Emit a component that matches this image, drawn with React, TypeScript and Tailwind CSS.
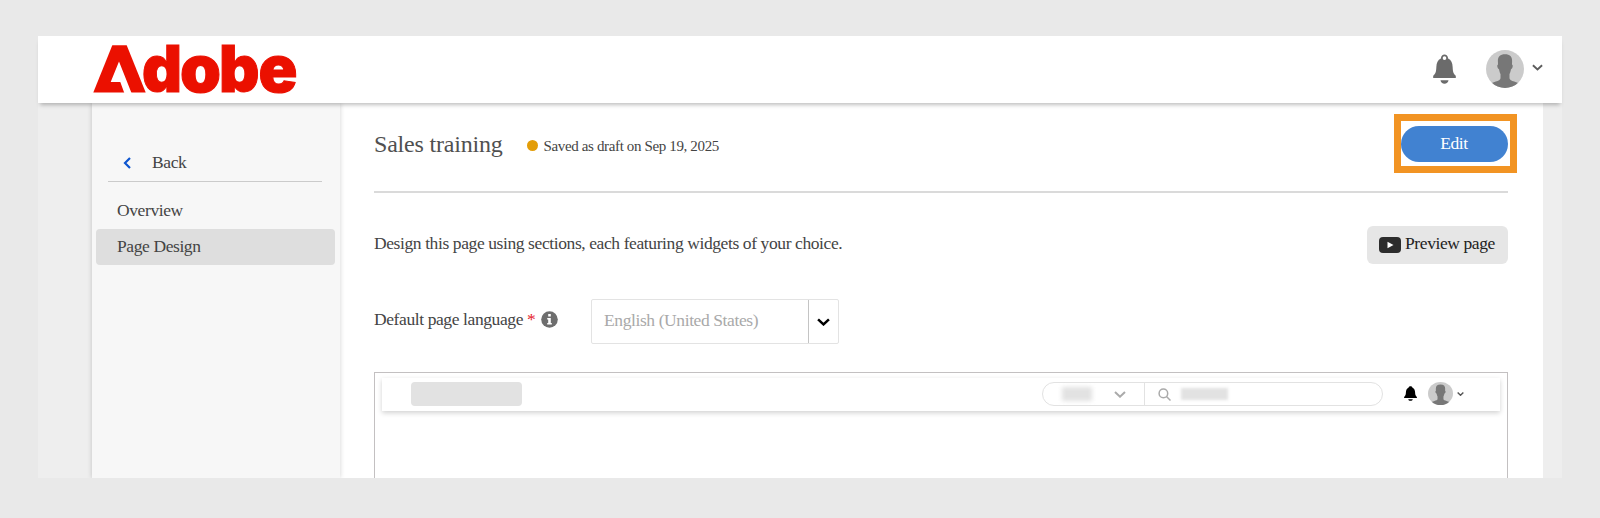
import React from "react";

function BellIcon({ className, hole = true }: { className: string; hole?: boolean }) {
  return (
    <svg viewBox="0 0 24 30" preserveAspectRatio="none" className={className} fill="currentColor">
      <path
        fillRule="evenodd"
        d={
          hole
            ? "M8.200 4.400C8.400 2 10 .4 12 .4s3.600 1.600 3.800 4C19 5.800 20.300 8.500 20.500 13c.200 4.500.600 6.500 3.300 8.800V24H.200v-2.200C2.900 19.500 3.300 17.500 3.500 13 3.700 8.500 5 5.800 8.200 4.400zM12 2.200a1.900 1.900 0 1 0 0 3.800 1.900 1.900 0 0 0 0-3.800z"
            : "M8.200 3.600C8.400 1.500 10 .4 12 .4s3.600 1.100 3.800 3.200C19 5.200 20.300 8.500 20.500 13c.200 4.500.600 6.500 3.300 8.800V24H.200v-2.200C2.900 19.500 3.300 17.500 3.500 13 3.700 8.500 5 5.200 8.200 3.600z"
        }
      />
      <path d="M7.800 26.300h8.400c-.4 2-2 3.400-4.200 3.400s-3.800-1.400-4.200-3.400z" />
    </svg>
  );
}

function Avatar({ className, id }: { className: string; id: string }) {
  return (
    <svg viewBox="0 0 38 38" preserveAspectRatio="none" className={className}>
      <clipPath id={id}>
        <circle cx="19" cy="19" r="19" />
      </clipPath>
      <g clipPath={`url(#${id})`}>
        <rect width="38" height="38" fill="#cbcbcb" />
        <path
          fill="#777"
          d="M19 4.200c4.800 0 7.300 2.400 7.100 7l-.1 3.300c.8.300.9 1.500.5 2.800-.3 1.200-.9 1.800-1.500 1.900-.4 2.200-.9 3.700-1.500 4.800v4.200c0 1.700 2.200 2.500 4.700 3.300 3 .9 4.300 1.600 5 3.200V38H4.800v-3.300c.7-1.600 2-2.300 5-3.200 2.500-.8 4.700-1.600 4.700-3.300V24c-.6-1.100-1.100-2.600-1.500-4.800-.6-.1-1.200-.7-1.500-1.900-.4-1.300-.3-2.500.5-2.800l-.1-3.300C11.700 6.600 14.200 4.200 19 4.200z"
        />
      </g>
    </svg>
  );
}

function Chevron({ className, width }: { className: string; width: number }) {
  return (
    <svg viewBox="0 0 12 7" className={className} fill="none" stroke="currentColor" strokeWidth={width}>
      <path d="M1 1l5 4.700L11 1" />
    </svg>
  );
}

function Logo() {
  return (
    <svg
      className="h-[52px] w-[206px] overflow-visible"
      viewBox="0 0 206 52"
      fill="#eb1000"
      fontFamily="Inter, sans-serif"
      fontWeight="900"
      letterSpacing="0"
    >
      <text y="50" fontSize="65">
        <tspan x="6" fontSize="58" textLength="42" lengthAdjust="spacingAndGlyphs">A</tspan>
        <tspan stroke="#eb1000" strokeWidth="1">
          <tspan x="50" textLength="40" lengthAdjust="spacingAndGlyphs">d</tspan>
          <tspan x="88" textLength="41" lengthAdjust="spacingAndGlyphs">o</tspan>
          <tspan x="127" textLength="40.500" lengthAdjust="spacingAndGlyphs">b</tspan>
          <tspan x="166.500" textLength="39" lengthAdjust="spacingAndGlyphs">e</tspan>
        </tspan>
      </text>
      <path d="M20.300 3.200h14.400l19 47.300H1.300z" />
      <path d="M27 19.500L39.500 51h-7.200l-4-11h-9.600z" fill="#fff" />
    </svg>
  );
}

function Header() {
  return (
    <header className="relative z-10 flex h-[67px] shrink-0 items-start bg-white pr-[19px] pl-[54px] shadow-[0_4px_4px_-2px_rgba(0,0,0,0.25)]">
      <div className="mt-[6px]">
        <Logo />
      </div>
      <BellIcon className="mt-[18px] ml-auto h-[30px] w-[23px] text-[#6b6b6b]" />
      <Avatar id="user" className="mt-[14px] ml-[30px] size-[38px]" />
      <Chevron width={2} className="mt-[28px] ml-[8px] h-[7px] w-[11px] text-[#5c5c5c]" />
    </header>
  );
}

function Sidebar() {
  return (
    <aside className="relative flex w-[248px] shrink-0 flex-col bg-[#f7f7f7] pt-[42px] shadow-[0_0_5px_rgba(0,0,0,0.18)]">
      <a className="mr-[18px] ml-[16px] flex h-[37px] items-center border-b border-[#cbcbcb] pl-[15px]">
        <svg viewBox="0 0 8 12" className="h-[12px] w-[8px]" fill="none" stroke="#0d55cf" strokeWidth="2.200">
          <path d="M7 1L2 6l5 5" />
        </svg>
        <span className="ml-[21px] pb-[3px]">Back</span>
      </a>
      <nav className="mt-[11px] flex flex-col pr-[5px] pl-[4px]">
        <a className="flex h-[36px] items-center pb-[2px] pl-[21px]">Overview</a>
        <a className="flex h-[36px] items-center rounded-[4px] bg-[#dedede] pb-[3px] pl-[21px]">Page Design</a>
      </nav>
    </aside>
  );
}

function PreviewFrame() {
  return (
    <div className="mt-[28px] h-[140px] shrink-0 border border-[#c3c0c1] px-[7px] pt-[5px]">
      <div className="flex h-[33px] items-start pt-[4px] pl-[29px] shadow-[0_2px_5px_rgba(0,0,0,0.18)]">
        <div className="h-[24px] w-[111px] rounded-[4px] bg-[#e2e2e2]" />
        <div className="ml-[520px] flex h-[24px] w-[341px] items-center rounded-full border border-[#e2e2e2]">
          <div className="flex h-full w-[102px] items-center border-r border-[#e2e2e2] pl-[19px]">
            <div className="h-[14px] w-[30px] bg-[#e2e2e2] blur-[2px]" />
            <Chevron width={2} className="ml-[22px] h-[7px] w-[12px] text-[#aaa]" />
          </div>
          <svg viewBox="0 0 13 13" className="ml-[13px] size-[13px]" fill="none" stroke="#aaa" strokeWidth="1.500">
            <circle cx="5.400" cy="5.400" r="4.300" />
            <path d="M8.500 8.500l4 4" />
          </svg>
          <div className="ml-[10px] h-[12px] w-[47px] bg-[#e2e2e2] blur-[1.500px]" />
        </div>
        <BellIcon hole={false} className="mt-[4px] ml-[21px] h-[15px] w-[13px] text-black" />
        <Avatar id="preview-user" className="ml-[11px] h-[23px] w-[25px]" />
        <Chevron width={2.500} className="mt-[10px] ml-[4px] h-[4px] w-[7px] text-[#555]" />
      </div>
    </div>
  );
}

function Main() {
  return (
    <main className="flex min-w-0 flex-1 flex-col bg-white pr-[35px] pl-[34px]">
      <div className="flex h-[90px] shrink-0 items-start border-b-2 border-[#dadada] pt-[23px]">
        <h1 className="mt-[2px] text-[24px] leading-[32px] tracking-[-0.2px] text-[#505050]">Sales training</h1>
        <span className="mt-[14px] ml-[24px] size-[11px] rounded-full bg-[#e39d08]" />
        <span className="mt-[10px] ml-[6px] text-[15px] leading-[20px] tracking-[-0.36px]">
          Saved as draft on Sep 19, 2025
        </span>
        <div className="relative ml-auto">
          <button className="block h-[36px] w-[107px] rounded-full bg-[#4182d1] pr-[1px] pb-[2px] text-white">Edit</button>
          <div className="absolute top-[-12px] left-[-7px] h-[59px] w-[123px] border-[7px] border-[#f29423]" />
        </div>
      </div>

      <div className="mt-[33px] flex h-[38px] shrink-0 items-center justify-between">
        <p className="pb-[4px]">Design this page using sections, each featuring widgets of your choice.</p>
        <button className="flex h-[38px] w-[141px] items-center rounded-[6px] bg-[#e6e6e6] pl-[12px] text-[#222]">
          <svg viewBox="0 0 22 16" className="h-[16px] w-[22px]">
            <rect width="22" height="16" rx="4" fill="#2c2c2c" />
            <path d="M8.500 4.700l6 3.300-6 3.300z" fill="#fff" />
          </svg>
          <span className="ml-[4px] pb-[4px]">Preview page</span>
        </button>
      </div>

      <div className="mt-[35px] flex h-[45px] shrink-0 items-center">
        <span className="w-[149px] pb-[5px] whitespace-nowrap">Default page language</span>
        <span className="ml-[4px] w-[8px] pb-[5px] text-[#e5202b]">*</span>
        <svg viewBox="0 0 17 17" className="mb-[4px] ml-[6px] size-[17px]">
          <circle cx="8.500" cy="8.500" r="8.300" fill="#6e6e6e" />
          <path d="M7.200 3h2.600v2.500H7.200zM6.200 7h3.600v5h1v1.400H6.200V12h1V8.400h-1z" fill="#fff" />
        </svg>
        <div className="ml-[33px] flex h-[45px] w-[248px] rounded-[2px] border border-[#e3e3e3] text-[#a9a9a9]">
          <span className="flex flex-1 items-center pb-[3px] pl-[12px]">English (United States)</span>
          <span className="flex w-[30px] items-center justify-center border-l border-[#c4c4c4]">
            <Chevron width={2.300} className="h-[8px] w-[13px] text-black" />
          </span>
        </div>
      </div>

      <PreviewFrame />
    </main>
  );
}

export default function App() {
  return (
    <div className="h-[518px] w-[1600px] bg-[#e9e9e9] px-[38px] pt-[36px] font-['Liberation_Serif',serif] text-[17.500px] leading-[22px] tracking-[-0.4px] text-[#444]">
      <div className="flex h-[442px] flex-col bg-[#eeeeee]">
        <Header />
        <div className="flex min-h-0 flex-1 overflow-hidden pr-[19px] pl-[54px]">
          <Sidebar />
          <Main />
        </div>
      </div>
    </div>
  );
}
